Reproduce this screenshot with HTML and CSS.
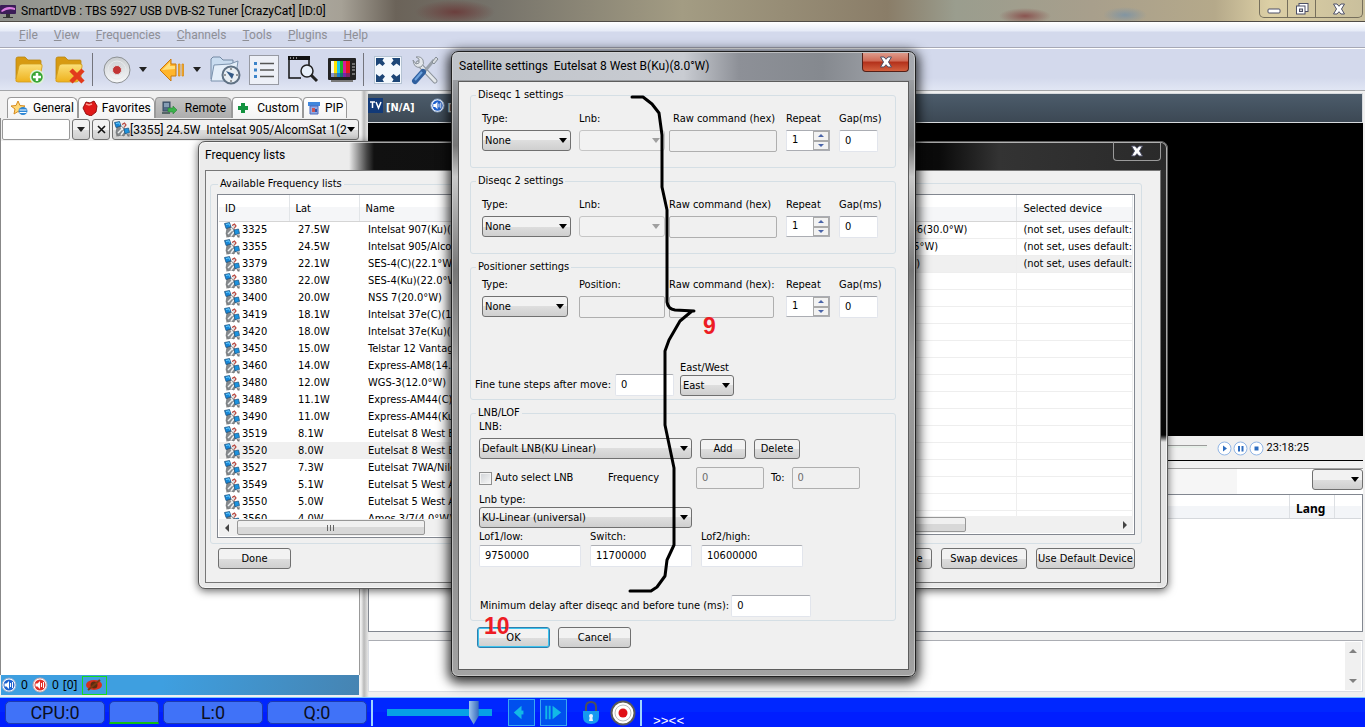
FILE: index.html
```html
<!DOCTYPE html>
<html lang="en">
<head>
<meta charset="utf-8">
<title>SmartDVB</title>
<link rel="stylesheet" href="styles.css">
</head>
<body>
<svg class="defs" aria-hidden="true">
  <defs>
    <linearGradient id="gold" x1="0" y1="0" x2="0" y2="1"><stop offset="0" stop-color="#fbe07a"/><stop offset="1" stop-color="#eeb11c"/></linearGradient>
    <linearGradient id="silver" x1="0" y1="0" x2="0" y2="1"><stop offset="0" stop-color="#c9cdd0"/><stop offset="1" stop-color="#f8f9fa"/></linearGradient>
  </defs>
  <symbol id="sat" viewBox="0 0 16 16">
    <path d="M3 6l4-1 4 3 1 3-2 4-3-1-3 1-2-3z" fill="#85898d" stroke="#5b5f63" stroke-width=".6"/>
    <path d="M4 12l4-4M7 14l3-4M7 6l2 3" stroke="#eceeef" stroke-width="1.500"/>
    <path d="M.5 1.500l5-1 1.500 4.500-5 1.500z" fill="#1787d8" stroke="#1a4d78" stroke-width=".7"/>
    <path d="M2 2.500l3-.7 .6 1.800" stroke="#6fd0ff" fill="none"/>
    <path d="M10 8l4.500-1 1 4.500-4.500 1.300z" fill="#1d94e0" stroke="#1a4d78" stroke-width=".7"/>
    <path d="M8 3.500l2.500-1.500 1.500 2-2 2.500" fill="#ddd" stroke="#b8433b" stroke-width="1.200"/>
    <path d="M13 13l1.500 2.500M15 12.500v3M3 13v2.500" stroke="#777" stroke-width="1.200"/>
  </symbol>
  <symbol id="folder" viewBox="0 0 32 30">
    <path d="M2 4q0-2 2-2h7l3 3h12q1 0 1 1v18H2z" fill="#d79a12" stroke="#b98712" stroke-width=".8"/>
    <path d="M4 27q-3 0-2-3l3-13q.5-2 3-2h18q3 0 2 3l-3 13q-.500 2-3 2z" fill="url(#gold)" stroke="#d09c1c" stroke-width=".8"/>
  </symbol>
  <symbol id="speaker-blue" viewBox="0 0 16 16">
    <circle cx="8" cy="8" r="7" fill="#fff" stroke="#8aa6cc"/><circle cx="8" cy="8" r="5.500" fill="#1f62cf"/>
    <path d="M3.500 6.500h2L8 4v8L5.500 9.500h-2z" fill="#fff"/><path d="M9.500 6v4M11.500 5v6" stroke="#fff"/>
  </symbol>
  <symbol id="speaker-red" viewBox="0 0 16 16">
    <circle cx="8" cy="8" r="7" fill="#fff" stroke="#cfa6a6"/><circle cx="8" cy="8" r="5.500" fill="#e02f28"/>
    <path d="M3.500 6.500h2L8 4v8L5.500 9.500h-2z" fill="#fff"/><path d="M9.500 6v4M11.500 5v6" stroke="#fff"/>
  </symbol>
  <symbol id="close" viewBox="0 0 14 12">
    <path d="M1.500 1h3.500L7 3.300 9 1h3.500L9.500 6l3 5H9L7 8.700 5 11H1.500l3-5z" fill="#fff" stroke="#4c4f66"/>
  </symbol>
</svg>

<div class="app">
  <header class="titlebar">
    <svg class="app-icon" viewBox="0 0 16 16"><rect x="0" y="2" width="16" height="9" rx="1" fill="#3b1d57"/><path d="M1 8q5-6 14-3v2Q8 5 2 9z" fill="#db7ee0"/><path d="M6 11h4v3H6zM3 14h10v1H3z" fill="#333"/></svg>
    <h1 class="app-title">SmartDVB : TBS 5927 USB DVB-S2 Tuner [CrazyCat] [ID:0]</h1>
    <div class="window-buttons">
      <button class="win-btn" aria-label="Minimize"><svg width="14" height="12" viewBox="0 0 14 12"><rect x="1" y="6" width="12" height="4" rx="1" fill="#fff" stroke="#4c4f66"/></svg></button>
      <button class="win-btn" aria-label="Restore"><svg width="14" height="12" viewBox="0 0 14 12"><rect x="4" y=".5" width="9" height="8" fill="#fff" stroke="#4c4f66"/><rect x="1.500" y="3" width="8.500" height="8" fill="#fff" stroke="#4c4f66"/><rect x="4.500" y="6" width="3" height="2.500" fill="#ccc" stroke="#4c4f66"/></svg></button>
      <button class="win-btn win-close" aria-label="Close"><svg width="14" height="12"><use href="#close"/></svg></button>
    </div>
  </header>

  <nav class="menubar">
    <a href="#"><u>F</u>ile</a><a href="#"><u>V</u>iew</a><a href="#"><u>F</u>requencies</a><a href="#"><u>C</u>hannels</a><a href="#"><u>T</u>ools</a><a href="#"><u>P</u>lugins</a><a href="#"><u>H</u>elp</a>
  </nav>

  <div class="toolbar">
    <button aria-label="Add folder"><svg width="32" height="30" viewBox="0 0 32 30"><use href="#folder" width="32" height="30"/><circle cx="23" cy="22" r="6.500" fill="#39a536" stroke="#dff3d8" stroke-width="1.500"/><path d="M23 18v8M19 22h8" stroke="#fff" stroke-width="2.500"/></svg></button>
    <button class="gap-m" aria-label="Delete folder"><svg width="32" height="30" viewBox="0 0 32 30"><use href="#folder" width="32" height="30"/><path d="M17 15l12 12M29 15L17 27" stroke="#e23a1d" stroke-width="4.500"/></svg></button>
    <span class="sep"></span>
    <button class="gap-m" aria-label="Record"><svg width="28" height="30" viewBox="0 0 28 30"><circle cx="14" cy="15" r="13" fill="url(#silver)" stroke="#8d9194"/><circle cx="14" cy="15" r="9" fill="none" stroke="#e8eaec"/><circle cx="14" cy="15" r="4.500" fill="#c23434" stroke="#ddd"/></svg></button>
    <span class="caret gap-m"></span>
    <button class="gap-l" aria-label="Back"><svg width="26" height="30" viewBox="0 0 26 30"><path d="M1 15L12 4v5h5v12h-5v5z" fill="#ffb52b" stroke="#c9780f"/><path d="M3 15l8-8v4h5v3z" fill="#ffe07b"/><path d="M19.500 9v12h1.500V9zM23 9v12h1.500V9z" fill="#ffb52b" stroke="#d58a1a" stroke-width=".8"/></svg></button>
    <span class="caret gap-m"></span>
    <button class="gap-m" aria-label="History"><svg width="32" height="32" viewBox="0 0 32 32"><path d="M2 25V5l2-2h7l3 3h10v5" fill="#c9dcf0" stroke="#7388a3"/><path d="M2 27l3-16 16-1 8-3-3 20z" fill="#e4eef9" stroke="#7b92ad"/><circle cx="22" cy="21" r="8.500" fill="#e8eef3" stroke="#5f7184" stroke-width="2"/><path d="M17 17l8 3-2 5z" fill="#345a86"/><path d="M22 14v2M22 26v2M15 21h2M27 21h2" stroke="#444"/></svg></button>
    <button class="list-btn gap-m" aria-label="List"><svg width="24" height="26" viewBox="0 0 24 26"><path d="M2 5h3v3H2zM2 11.500h3v3H2zM2 18h3v3H2z" fill="#3b83c9"/><path d="M8 6.500h14M8 13h14M8 19.500h14" stroke="#555" stroke-width="1.300"/></svg></button>
    <button class="gap-m" aria-label="Search window"><svg width="32" height="30" viewBox="0 0 32 30"><path d="M14 23H2V3h20v8" fill="none" stroke="#111" stroke-width="1.500"/><path d="M1 1h22v4H1z" fill="#111"/><path d="M3 3h1M6 3h1M9 3h1" stroke="#fff"/><circle cx="20" cy="16" r="6" fill="#e8f0fa" stroke="#222" stroke-width="1.500"/><path d="M24 20l6 6" stroke="#222" stroke-width="3"/></svg></button>
    <button class="gap-m" aria-label="Television"><svg width="30" height="28" viewBox="0 0 30 28"><rect x="1" y="2" width="28" height="22" rx="1" fill="#222"/><path d="M4 24h22v2H4z" fill="#777"/><rect x="4" y="5" width="19" height="16" fill="#eee"/><path d="M5.500 5v16" stroke="#f4f4f4" stroke-width="3"/><path d="M8.500 5v16" stroke="#ffe400" stroke-width="3"/><path d="M11.500 5v16" stroke="#1fc8e8" stroke-width="3"/><path d="M14.500 5v16" stroke="#19b42b" stroke-width="3"/><path d="M17.500 5v16" stroke="#d81a9a" stroke-width="3"/><path d="M21 5v16" stroke="#e21c1c" stroke-width="4"/><path d="M4 17h19v4H4z" fill="#1632b4" opacity=".5"/><path d="M25 8h3M25 11h3M25 14h3M25 18h3" stroke="#bbb"/></svg></button>
    <span class="sep"></span>
    <button class="gap-m" aria-label="Full screen"><svg width="28" height="30" viewBox="0 0 28 30"><rect x=".5" y="1.500" width="27" height="27" fill="#f3f8fd" stroke="#b5c3d3"/><path d="M2 3h8L8.500 5.500l2.500 3-2.500 2.500-3-2.500L2 11zM26 3h-8l1.500 2.500-2.500 3 2.500 2.500 3-2.500L26 11zM2 27h8l-1.500-2.500 2.500-3L8.500 19l-3 2.500L2 19zM26 27h-8l1.500-2.500-2.500-3 2.500-2.500 3 2.500L26 19z" fill="#1d4677"/></svg></button>
    <button class="gap-m" aria-label="Settings"><svg width="30" height="30" viewBox="0 0 30 30"><path d="M8 8l17 18" stroke="#8d949c" stroke-width="5" stroke-linecap="round"/><path d="M8 8l17 18" stroke="#e3e7ea" stroke-width="3" stroke-linecap="round"/><path d="M3 5l3 4 3-1 0-4-3-2q5-1 7 3t-2 7q-7 2-8-7z" fill="#e3e7ea" stroke="#8d949c"/><path d="M24 5L14 17" stroke="#99a1aa" stroke-width="3"/><path d="M26 2l2 2-4 5-2-2z" fill="#d9dde1" stroke="#858d95"/><path d="M13 17L5 26" stroke="#2f5f9e" stroke-width="6" stroke-linecap="round"/><path d="M12 17l-7 8" stroke="#6ea3dd" stroke-width="2"/></svg></button>
  </div>

  <main class="workspace">
    <section class="channels">
      <div class="tabs" role="tablist">
        <button class="tab" role="tab"><svg width="18" height="16" viewBox="0 0 18 16"><path d="M7 1l2 4.500 5 .5-4 3 1 5-4-2.500L3 14l1-5L0 6l5-.5z" fill="#ffd877" stroke="#d68b1f"/><ellipse cx="12" cy="11" rx="4.500" ry="4" fill="#2d86d4"/><path d="M8.500 10h7M8.500 12.500h7" stroke="#fff"/></svg>General</button>
        <button class="tab" role="tab"><svg width="16" height="16" viewBox="0 0 16 16"><path d="M4 2l4 1 4-2 3 5-1 6-5 4-5-2-3-6z" fill="#e01a1a" stroke="#971010"/><path d="M4 4l3 1 3-1" stroke="#ff9a8e" stroke-width="1.500" fill="none"/></svg>Favorites</button>
        <button class="tab tab-active" role="tab" aria-selected="true"><svg width="16" height="16" viewBox="0 0 16 16"><rect x="2" y="2" width="7" height="9" fill="#506a86" stroke="#36495e"/><path d="M3 4h5M3 6h5" stroke="#bcd0e2"/><path d="M7 8h5V6l4 4-4 4v-2H7z" fill="#3bb24a" stroke="#2a7f35" stroke-width=".6"/><path d="M1 12h8v2H1z" fill="#566"/></svg>Remote</button>
        <button class="tab tab-wide" role="tab"><svg width="14" height="16" viewBox="0 0 14 16"><path d="M5 3h4v3h3v4H9v3H5v-3H2V6h3z" fill="#12923f"/></svg>Custom</button>
        <button class="tab" role="tab"><svg width="14" height="14" viewBox="0 0 14 14"><path d="M1 1h12v4H1z" fill="#3f86dd"/><path d="M3 5h8v8H3z" fill="#8ea9e8" stroke="#4d68b9"/><path d="M5 7h3v4H5z" fill="#c55"/><path d="M8 8h2v3H8z" fill="#35a"/></svg>PIP</button>
      </div>
      <div class="finder">
        <input class="find-input" type="text" aria-label="Search channel">
        <button class="btn find-btn" aria-label="Search options"><span class="caret"></span></button>
        <button class="btn find-btn" aria-label="Clear search"><svg width="9" height="9" viewBox="0 0 9 9"><path d="M1 1l7 7M8 1L1 8" stroke="#111" stroke-width="1.600"/></svg></button>
        <div class="combo sat-combo"><select aria-label="Satellite"><option>[3355] 24.5W&nbsp; Intelsat 905/AlcomSat 1(2</option></select><svg width="16" height="16"><use href="#sat"/></svg></div>
      </div>
      <div class="channel-list"></div>
      <div class="audio-status">
        <svg width="16" height="16"><use href="#speaker-blue"/></svg><span>0</span>
        <svg width="16" height="16"><use href="#speaker-red"/></svg><span>0</span><span>[0]</span>
        <span class="eye"><svg width="18" height="14" viewBox="0 0 18 14"><ellipse cx="9" cy="7" rx="8" ry="5" fill="#d6301c"/><circle cx="9" cy="7" r="3.500" fill="#5a2c10"/><path d="M3 12L15 2" stroke="#7c3a10" stroke-width="2"/></svg></span>
      </div>
    </section>

    <section class="viewer">
      <div class="now-bar"><svg width="15" height="15" viewBox="0 0 15 15"><rect width="15" height="15" fill="#123a78"/><path d="M2 4h5M4.500 4v6M8 4l2.500 6L13 4" stroke="#fff" stroke-width="1.500" fill="none"/></svg><b>[N/A]</b><svg class="now-audio" width="15" height="15"><use href="#speaker-blue" width="15" height="15"/></svg><b>[</b></div>
      <div class="video"></div>
      <div class="player">
        <span class="seek"></span>
        <button aria-label="Play"><svg width="15" height="15" viewBox="0 0 15 15"><circle cx="7.500" cy="7.500" r="6.500" fill="#fff" stroke="#92b6e6"/><path d="M6 4.500l4 3-4 3z" fill="#2c6cc0"/></svg></button>
        <button aria-label="Pause"><svg width="15" height="15" viewBox="0 0 15 15"><circle cx="7.500" cy="7.500" r="6.500" fill="#fff" stroke="#92b6e6"/><path d="M5 5h2v5.500H5zM8.500 5h2v5.500h-2z" fill="#2c6cc0"/></svg></button>
        <button aria-label="Stop"><svg width="15" height="15" viewBox="0 0 15 15"><circle cx="7.500" cy="7.500" r="6.500" fill="#fff" stroke="#92b6e6"/><path d="M5.500 5.500h4v4h-4z" fill="#2c6cc0"/></svg></button>
        <time>23:18:25</time>
      </div>
      <div class="lang-filter"><div class="combo lang-combo"><select aria-label="Language"><option></option></select></div></div>
      <div class="epg">
        <div class="epg-head"><span class="epg-main"></span><b class="epg-lang">Lang</b><span class="epg-end"></span></div>
      </div>
      <div class="details"><div class="vscroll"><i class="up"></i><i class="down"></i></div></div>
    </section>
  </main>

  <footer class="statusbar">
    <span class="meter">CPU:0</span><span class="meter meter-small"></span><span class="meter">L:0</span><span class="meter">Q:0</span>
    <span class="sep-light"></span>
    <input class="volume" type="range" min="0" max="100" value="86" aria-label="Volume">
    <button class="step" aria-label="Previous"><svg width="25" height="25" viewBox="0 0 26 26"><path d="M13 6v14l-8-7z" fill="#12b9e6"/><path d="M12 11h3v4h-3z" fill="#12b9e6"/></svg></button>
    <button class="step" aria-label="Next"><svg width="25" height="25" viewBox="0 0 26 26"><path d="M5.500 6v14M9 6v14" stroke="#12b9e6" stroke-width="2"/><path d="M12 6v14l9-7z" fill="#12b9e6"/></svg></button>
    <svg class="lock" width="18" height="26" viewBox="0 0 18 26"><path d="M4 12V7q0-5 5-5t5 5v5" fill="none" stroke="#4b515b" stroke-width="2"/><path d="M1 11h16v6q0 7-8 7t-8-7z" fill="#159af0"/><circle cx="9" cy="16" r="2" fill="#e8f3ff"/><path d="M8 16h2l1 5H7z" fill="#e8f3ff"/></svg>
    <svg class="rec" width="26" height="26" viewBox="0 0 26 26"><circle cx="13" cy="13" r="11.500" fill="#fff" stroke="#5a5a5a" stroke-width="2"/><circle cx="13" cy="13" r="8" fill="#fff" stroke="#bbb"/><circle cx="13" cy="13" r="4.500" fill="#e00f17"/></svg>
    <span class="sep-light"></span>
    <span class="arrows">&gt;&gt;&lt;&lt;</span>
  </footer>
</div>

<section class="window freq-window" aria-label="Frequency lists">
  <header class="window-head"><h2>Frequency lists</h2><button class="dark-close" aria-label="Close"><svg width="14" height="12"><use href="#close"/></svg></button></header>
  <div class="window-body freq-body">
    <div class="freq-groups">
      <fieldset class="group freq-left">
        <legend>Available Frequency lists</legend>
        <div class="listbox">
          <table class="freq-table">
            <colgroup><col class="c-id"><col class="c-lat"><col></colgroup>
            <thead><tr><th>ID</th><th>Lat</th><th>Name</th></tr></thead>
            <tbody>
              <tr><td><svg><use href="#sat"/></svg>3325</td><td>27.5W</td><td>Intelsat 907(Ku)(27.5°W)</td></tr>
              <tr><td><svg><use href="#sat"/></svg>3355</td><td>24.5W</td><td>Intelsat 905/AlcomSat 1(24.5°W)</td></tr>
              <tr><td><svg><use href="#sat"/></svg>3379</td><td>22.1W</td><td>SES-4(C)(22.1°W)</td></tr>
              <tr><td><svg><use href="#sat"/></svg>3380</td><td>22.0W</td><td>SES-4(Ku)(22.0°W)</td></tr>
              <tr><td><svg><use href="#sat"/></svg>3400</td><td>20.0W</td><td>NSS 7(20.0°W)</td></tr>
              <tr><td><svg><use href="#sat"/></svg>3419</td><td>18.1W</td><td>Intelsat 37e(C)(18.1°W)</td></tr>
              <tr><td><svg><use href="#sat"/></svg>3420</td><td>18.0W</td><td>Intelsat 37e(Ku)(18.0°W)</td></tr>
              <tr><td><svg><use href="#sat"/></svg>3450</td><td>15.0W</td><td>Telstar 12 Vantage(15.0°W)</td></tr>
              <tr><td><svg><use href="#sat"/></svg>3460</td><td>14.0W</td><td>Express-AM8(14.0°W)</td></tr>
              <tr><td><svg><use href="#sat"/></svg>3480</td><td>12.0W</td><td>WGS-3(12.0°W)</td></tr>
              <tr><td><svg><use href="#sat"/></svg>3489</td><td>11.1W</td><td>Express-AM44(C)(11.1°W)</td></tr>
              <tr><td><svg><use href="#sat"/></svg>3490</td><td>11.0W</td><td>Express-AM44(Ku)(11.0°W)</td></tr>
              <tr><td><svg><use href="#sat"/></svg>3519</td><td>8.1W</td><td>Eutelsat 8 West B(C)(8.1°W)</td></tr>
              <tr class="picked"><td><svg><use href="#sat"/></svg>3520</td><td>8.0W</td><td>Eutelsat 8 West B(Ku)(8.0°W)</td></tr>
              <tr><td><svg><use href="#sat"/></svg>3527</td><td>7.3W</td><td>Eutelsat 7WA/Nilesat(7.3°W)</td></tr>
              <tr><td><svg><use href="#sat"/></svg>3549</td><td>5.1W</td><td>Eutelsat 5 West A(C)(5.1°W)</td></tr>
              <tr><td><svg><use href="#sat"/></svg>3550</td><td>5.0W</td><td>Eutelsat 5 West A(Ku)(5.0°W)</td></tr>
              <tr><td><svg><use href="#sat"/></svg>3560</td><td>4.0W</td><td>Amos 3/7(4.0°W)</td></tr>
            </tbody>
          </table>
          <div class="hscroll"><i class="left"></i><span class="thumb"></span><i class="right"></i></div>
        </div>
      </fieldset>
      <fieldset class="group freq-right">
        <div class="listbox">
          <table class="freq-table lined">
            <colgroup><col class="c-id"><col class="c-lat"><col class="c-name"><col></colgroup>
            <thead><tr><th></th><th></th><th></th><th>Selected device</th></tr></thead>
            <tbody>
              <tr><td></td><td></td><td>Hispasat 30W-4/30W-5/30W-6(30.0°W)</td><td>(not set, uses default:</td></tr>
              <tr><td></td><td></td><td>Intelsat 905/AlcomSat 1(24.5°W)</td><td>(not set, uses default:</td></tr>
              <tr class="picked"><td></td><td></td><td>Eutelsat 8 West B(Ku)(8.0°W)</td><td>(not set, uses default:</td></tr>
              <tr><td></td><td></td><td></td><td></td></tr><tr><td></td><td></td><td></td><td></td></tr>
              <tr><td></td><td></td><td></td><td></td></tr><tr><td></td><td></td><td></td><td></td></tr>
              <tr><td></td><td></td><td></td><td></td></tr><tr><td></td><td></td><td></td><td></td></tr>
              <tr><td></td><td></td><td></td><td></td></tr><tr><td></td><td></td><td></td><td></td></tr>
              <tr><td></td><td></td><td></td><td></td></tr><tr><td></td><td></td><td></td><td></td></tr>
              <tr><td></td><td></td><td></td><td></td></tr><tr><td></td><td></td><td></td><td></td></tr>
              <tr><td></td><td></td><td></td><td></td></tr><tr><td></td><td></td><td></td><td></td></tr>
              <tr><td></td><td></td><td></td><td></td></tr>
            </tbody>
          </table>
          <div class="hscroll"><i class="left"></i><span class="thumb thumb-long"></span><i class="right"></i></div>
        </div>
      </fieldset>
    </div>
    <div class="freq-actions">
      <button class="btn w73">Done</button>
      <span class="spring"></span>
      <button class="btn w59">Remove</button>
      <button class="btn w86">Swap devices</button>
      <button class="btn w99">Use Default Device</button>
    </div>
  </div>
</section>

<section class="window sat-window" aria-label="Satellite settings">
  <header class="window-head"><h2>Satellite settings&nbsp; Eutelsat 8 West B(Ku)(8.0°W)</h2><button class="red-close" aria-label="Close"><svg width="14" height="12"><use href="#close"/></svg></button></header>
  <form class="window-body sat-body">
    <fieldset class="group">
      <legend>Diseqc 1 settings</legend>
      <div class="diseqc">
        <label for="t1">Type:</label><label for="l1">Lnb:</label><label for="r1" class="indent">Raw command (hex)</label><label for="n1">Repeat</label><label for="g1">Gap(ms)</label>
        <div class="combo w89"><select id="t1"><option>None</option></select></div>
        <div class="combo w86 off"><select id="l1" disabled><option></option></select></div>
        <input class="w108" id="r1" type="text" disabled>
        <div class="spin"><input id="n1" type="text" value="1"><div class="spin-btns"><button type="button" aria-label="Increase"><i class="up"></i></button><button type="button" aria-label="Decrease"><i class="down"></i></button></div></div>
        <input class="w39" id="g1" type="text" value="0">
      </div>
    </fieldset>
    <fieldset class="group">
      <legend>Diseqc 2 settings</legend>
      <div class="diseqc">
        <label for="t2">Type:</label><label for="l2">Lnb:</label><label for="r2">Raw command (hex)</label><label for="n2">Repeat</label><label for="g2">Gap(ms)</label>
        <div class="combo w89"><select id="t2"><option>None</option></select></div>
        <div class="combo w86 off"><select id="l2" disabled><option></option></select></div>
        <input class="w108" id="r2" type="text" disabled>
        <div class="spin"><input id="n2" type="text" value="1"><div class="spin-btns"><button type="button" aria-label="Increase"><i class="up"></i></button><button type="button" aria-label="Decrease"><i class="down"></i></button></div></div>
        <input class="w39" id="g2" type="text" value="0">
      </div>
    </fieldset>
    <fieldset class="group positioner">
      <legend>Positioner settings</legend>
      <div class="diseqc">
        <label for="t3">Type:</label><label for="l3">Position:</label><label for="r3">Raw command (hex):</label><label for="n3">Repeat</label><label for="g3">Gap(ms)</label>
        <div class="combo w86"><select id="t3"><option>None</option></select></div>
        <input class="w86" id="l3" type="text" disabled>
        <input class="w105" id="r3" type="text" disabled>
        <div class="spin"><input id="n3" type="text" value="1"><div class="spin-btns"><button type="button" aria-label="Increase"><i class="up"></i></button><button type="button" aria-label="Decrease"><i class="down"></i></button></div></div>
        <input class="w39" id="g3" type="text" value="0">
      </div>
      <div class="fine">
        <label for="fine" class="fine-label">Fine tune steps after move:</label>
        <input class="w59" id="fine" type="text" value="0">
        <div class="stack"><label for="ew">East/West</label><div class="combo w54"><select id="ew"><option>East</option></select></div></div>
      </div>
    </fieldset>
    <fieldset class="group lnb">
      <legend>LNB/LOF</legend>
      <label class="line" for="lnb">LNB:</label>
      <div class="row lnb-row"><div class="combo w213"><select id="lnb"><option>Default LNB(KU Linear)</option></select></div><button type="button" class="btn w46">Add</button><button type="button" class="btn w46">Delete</button></div>
      <div class="row auto-row">
        <label class="auto"><input type="checkbox">Auto select LNB</label>
        <label for="ff" class="freq-label">Frequency</label><input id="ff" class="w68" type="text" value="0" disabled>
        <label for="ft">To:</label><input id="ft" class="w68" type="text" value="0" disabled>
      </div>
      <label class="line" for="lt">Lnb type:</label>
      <div class="combo w213"><select id="lt"><option>KU-Linear (universal)</option></select></div>
      <div class="lofs">
        <label for="lo1">Lof1/low:</label><label for="sw">Switch:</label><label for="lo2">Lof2/high:</label>
        <input id="lo1" type="text" value="9750000"><input id="sw" type="text" value="11700000"><input id="lo2" type="text" value="10600000">
      </div>
      <div class="row delay-row"><label for="dl">Minimum delay after diseqc and before tune (ms):</label><input id="dl" class="w80" type="text" value="0"></div>
    </fieldset>
    <div class="row actions"><button type="button" class="btn w73 default">OK</button><button type="button" class="btn w73">Cancel</button></div>
  </form>
  <svg class="brace" viewBox="452 52 463 624" aria-hidden="true"><path d="M632 97h11l9 7 7 9 3 22v52l5 23v92q1 7 8 8l19 1M692 311l-12 10-11 19-4 11v74l9 43v77l-7 15-2 16-8 11-6 4h-21" fill="none" stroke="#000" stroke-width="3" stroke-linejoin="round" stroke-linecap="round"/></svg>
  <span class="mark mark-nine">9</span>
  <span class="mark mark-ten">10</span>
</section>
</body>
</html>
```
FILE: styles.css
```css
* { box-sizing: border-box; }
body {
  margin: 0;
  font: 11px/14px "DejaVu Sans Condensed", "Noto Sans", sans-serif;
  color: #000;
  overflow: hidden;
}
button, input, select { font: inherit; color: inherit; margin: 0; padding: 0; }
button { border: 0; background: none; }
svg { display: block; flex: none; }
.defs { position: absolute; width: 0; height: 0; }

.app { display: flex; flex-direction: column; height: 100vh; background: #f0f0f0; }

/* title bar */
.titlebar {
  display: flex; align-items: center; height: 22px; flex: none;
  border-bottom: 1px solid #504c46;
  background:
    radial-gradient(ellipse 40px 12px at 455px 12px, #6b3f3d, transparent),
    radial-gradient(ellipse 26px 8px at 1025px 16px, #8a5450, transparent),
    radial-gradient(ellipse 22px 8px at 1125px 15px, #8295a2, transparent),
    linear-gradient(90deg, #8f918c 0, #b5b3ab 18%, #a6a196 25%, #6b6359 29%, #75726a 36%, #a39c83 50%, #8a7d68 65%, #9a9d8e 70%, #a89f8c 80%, #b5a98a 89%, #dccfa5 93%, #c9bf9c 100%);
}
.app-icon { width: 16px; height: 16px; }
.app-title { margin: 0 0 0 5px; font: 12px/20px Roboto, sans-serif; flex: 1; }
.window-buttons { display: flex; align-self: flex-start; height: 18px; margin-right: 2px; border: 1px solid #766f5c; border-top: 0; border-radius: 0 0 5px 5px; }
.win-btn { display: grid; place-items: center; width: 28px; border-right: 1px solid #766f5c; }
.win-close { width: 46px; border: 0; }

/* menu and toolbar */
.menubar { display: flex; align-items: center; gap: 16px; height: 26px; flex: none; padding-left: 19px; background: linear-gradient(#fff 0, #e6ebf7 9px, #d3d9ec 10px); border-bottom: 1px solid #a6a8b5; font: 12px/16px Roboto, sans-serif; }
.menubar a { color: #8e8f96; text-decoration: none; }
.toolbar { display: flex; align-items: center; height: 43px; flex: none; padding-left: 14px; border-top: 1px solid #fff; border-bottom: 1px solid #a3a5a8; background: linear-gradient(#d3d9ec 70%, #e1e6f4); }
.gap-m { margin-left: 8px; }
.gap-l { margin-left: 12px; }
.sep { width: 1px; height: 33px; margin: 0 2px 0 6px; background: #73747c; }
.caret { border: 4px solid transparent; border-top: 5px solid #222; border-bottom: 0; }
.list-btn { padding: 1px 2px; border: 1px solid #979aa3; background: #edf0f7; }

/* workspace */
.workspace { display: flex; flex: 1; min-height: 0; gap: 8px; padding-top: 2px; background: linear-gradient(90deg, #f0f0f0 0 361px, #b9b9b9 364px, #f0f0f0 369px); }
.channels { display: flex; flex-direction: column; width: 360px; flex: none; }
.tabs { display: flex; height: 25px; align-items: flex-end; padding-left: 7px; }
.tab { display: flex; align-items: center; gap: 4px; height: 21px; padding: 0 3px; border: 1px solid #999; border-bottom: 0; border-radius: 4px 6px 0 0; background: linear-gradient(#fff, #f4f4f4); font: 12px/16px Roboto, sans-serif; }
.tab-active { background: linear-gradient(#c4c4c4, #adadad); gap: 8px; padding: 0 5px; }
.tab-wide { gap: 7px; }
.finder { display: flex; align-items: center; height: 23px; gap: 2px; padding: 0 1px; border-left: 1px solid #888; }
.finder .find-input { width: 68px; height: 21px; border-color: #999; }
.find-btn { width: 18px; display: grid; place-items: center; padding: 0; }
.sat-combo { flex: 1; height: 21px; }
.sat-combo svg { position: absolute; left: 2px; top: 2px; pointer-events: none; }
.channel-list { flex: 1; background: #fff; border-left: 1px solid #888; border-right: 1px solid #999; }
.audio-status { display: flex; align-items: center; gap: 4px; height: 20px; margin: 0 1px 2px 1px; background: linear-gradient(100deg, #3e9fe0 45%, #4684b2); font: 12px/18px "Noto Sans", sans-serif; }
.eye { display: grid; place-items: center; width: 25px; height: 19px; border: 1px solid #17d821; }

.viewer { display: flex; flex-direction: column; flex: 1; min-width: 0; padding-right: 2px; }
.now-bar { display: flex; align-items: flex-start; gap: 3px; height: 30px; flex: none; padding: 4px 0 0; border: 1px solid #d7dade; border-left: 0; background: linear-gradient(#4c5c6b, #3c4854); color: #fff; }
.now-bar b { line-height: 20px; }
.now-audio { margin-left: 12px; }
.video { flex: 1; background: #000; }
.player { display: flex; align-items: center; height: 25px; flex: none; gap: 1px; padding-right: 54px; border-bottom: 1px solid #000; background: #f0f0f0; }
.player time { margin-left: 2px; font: 11px/16px Roboto, sans-serif; }
.seek { flex: 1; height: 3px; margin: 0 9px 3px 0; border-top: 1px solid #9b9b9b; background: #e7efe9; }
.lang-filter { display: flex; justify-content: flex-end; height: 26px; margin-top: 7px; flex: none; border-top: 1px solid #a2a2a2; background: linear-gradient(90deg, #f6f6f6 calc(100% - 126px), #fff 0); }
.lang-combo { width: 51px; }
.epg { height: 138px; flex: none; border: 1px solid #828790; background: #fff; }
.epg-head { display: flex; height: 24px; margin: 0 1px; background: linear-gradient(#fff 50%, #f3f5f8 50%); border-bottom: 1px solid #d5d8dc; }
.epg-main { flex: 1; }
.epg-lang { padding: 7px 0 0 6px; width: 46px; border: solid #dde0e4; border-width: 0 1px; font: bold 12px/14px "Noto Sans", sans-serif; }
.epg-end { width: 26px; }
.details { display: flex; justify-content: flex-end; height: 52px; flex: none; margin: 8px 0 5px; padding: 1px; border: 1px solid #d9dce2; border-top-color: #abadb3; background: #fff; }
.vscroll { display: flex; flex-direction: column; align-items: center; justify-content: space-between; width: 16px; padding: 7px 0; background: #f0f0f0; }
.up, .down, .left, .right { width: 0; height: 0; border: 4px solid transparent; }
.up { border-top: 0; border-bottom: 4px solid #808080; }
.down { border-bottom: 0; border-top: 4px solid #808080; }
.left { border-left: 0; border-right: 4px solid #444; }
.right { border-right: 0; border-left: 4px solid #444; }

/* bottom bar */
.statusbar { display: flex; align-items: center; height: 30px; flex: none; padding-left: 5px; gap: 4px; border-top: 1px solid #7cc4ff; background: linear-gradient(#0027ff 50%, #001eff 50%); color: #0b0f1e; }
.meter { width: 100px; height: 23px; border: 1px solid #1d3bb0; border-radius: 5px; background: #4072f8; text-align: center; font: 18px/21px Roboto, sans-serif; }
.meter-small { width: 50px; border-bottom: 2px solid #0fbd12; border-radius: 5px 5px 0 0; }
.sep-light { width: 2px; height: 26px; background: #9fd5ff; }
.volume { width: 105px; height: 26px; margin: 0 12px 0 10px; appearance: none; background: linear-gradient(#06a1e6, #06a1e6) center / 100% 7px no-repeat; }
.volume::-webkit-slider-thumb { appearance: none; width: 10px; height: 24px; background: linear-gradient(90deg, #9cc4ee, #3568bb); clip-path: polygon(0 0, 100% 0, 100% 65%, 50% 100%, 0 65%); }
.step { width: 27px; height: 27px; border: 1px solid #39a7f2; background: #0050ee; margin-right: 1px; }
.lock { margin-left: 10px; }
.rec { margin-left: 6px; }
.arrows { margin-left: 7px; align-self: flex-end; color: #fff; font: 13px/10px "Liberation Mono", monospace; }

/* buttons, combos and inputs */
.btn { height: 21px; border: 1px solid #707070; border-radius: 3px; background: linear-gradient(#f2f2f2 50%, #dedede 50%, #cfcfcf); white-space: nowrap; }
.default { border-color: #2f7fae; box-shadow: inset 0 0 0 1px #3cc3ee; }
.combo { position: relative; height: 21px; }
.combo select { width: 100%; height: 100%; padding-left: 2px; appearance: none; border: 1px solid #707070; border-radius: 3px; background: linear-gradient(#f2f2f2 50%, #dedede 50%, #cfcfcf); }
.combo.sat-combo select { padding: 0 0 0 17px; font: 12px/16px Roboto, sans-serif; }
.combo::after { content: ""; position: absolute; right: 4px; top: 8px; border: 4px solid transparent; border-top: 5px solid #000; border-bottom: 0; pointer-events: none; }
.combo.off select { border-color: #b4b4b4; background: #f4f4f4; }
.combo.off::after { border-top-color: #a0a0a0; right: 5px; }
input[type="text"] { height: 22px; padding: 0 0 2px 5px; border: 1px solid #e2e5ec; border-top-color: #abadb3; border-radius: 2px; background: #fff; }
input[type="text"]:disabled { border-color: #afafaf; background: #f0f0f0; color: #6d6d6d; }
.w39 { width: 39px; } .w46 { width: 46px; } .w54 { width: 54px; } .w59 { width: 59px; }
.w68 { width: 68px; } .w73 { width: 73px; } .w80 { width: 80px; } .w86 { width: 86px; }
.w89 { width: 89px; } .w99 { width: 99px; } .w105 { width: 105px; } .w108 { width: 108px; } .w213 { width: 213px; }

/* floating windows */
.window { position: absolute; display: flex; flex-direction: column; border-radius: 7px; }
.window-head { display: flex; height: 28px; flex: none; }
.window-head h2 { margin: 0; flex: 1; font: 12px/26px Roboto, sans-serif; white-space: pre; }
.window-body { flex: 1; background: #f0f0f0; border: 1px solid #5d5d5d; }
.group { margin: 0; padding: 0; min-width: 0; border: 1px solid #d5dfe5; border-radius: 3px; }
.group legend { margin-left: 5px; padding: 0 2px; }
.row { display: flex; align-items: center; }

.freq-window {
  left: 198px; top: 141px; width: 970px; height: 448px;
  padding: 0 6px 6px; border: 1px solid #5a5a5a; box-shadow: 0 2px 8px #0009, inset 0 0 0 1px #ffffffa0;
  background:
    linear-gradient(90deg, #ececec 0 150px, #444 168px, #111 175px, #0a0a0a 740px, #333 800px, #2a2a2a) 0 0 / 100% 28px no-repeat,
    linear-gradient(#333 0, #050505 293px, #e4e4e4 300px) 100% 0 / 10px 100% no-repeat,
    #e9e9e9;
}
.dark-close { align-self: flex-start; display: grid; place-items: center; width: 48px; height: 19px; border: 1px solid #9a9a9a; border-top: 0; border-radius: 0 0 4px 4px; }
.freq-body { display: flex; flex-direction: column; padding: 6px 18px 13px 4px; border-color: #777; }
.freq-groups { display: flex; align-items: flex-start; gap: 66px; flex: 1; min-height: 0; }
.freq-left { flex: none; width: 338px; padding: 3px 6px 5px; }
.freq-left legend { margin-left: 1px; }
.freq-right { flex: 1; margin-top: 6px; padding: 10px 6px 8px; }
.listbox { display: flex; flex-direction: column; height: 344px; overflow: hidden; border: 1px solid #828790; background: #fff; padding: 0 1px 1px; }
.freq-right .listbox { height: 341px; }
.freq-table { flex: 1; display: block; overflow: hidden; border-collapse: collapse; table-layout: fixed; width: 100%; }
.freq-table th { height: 26px; padding: 3px 6px 0; text-align: left; font-weight: normal; border-bottom: 1px solid #d5d5d5; border-right: 1px solid #e2e5e8; background: linear-gradient(#fff 45%, #f5f6f8 45%); white-space: nowrap; }
.freq-table td { height: 17px; padding: 0 0 0 9px; line-height: 16px; white-space: nowrap; }
.freq-table td:first-child { padding-left: 5px; }
.freq-table td svg { width: 16px; height: 16px; float: left; margin-right: 2px; }
.c-id, .c-lat { width: 70px; }
.c-name { width: 259px; }
.freq-table.lined td { border: solid #eee; border-width: 0 1px 1px 0; padding-left: 6px; }
.freq-table.lined td:nth-child(3) { padding-left: 15px; }
.picked td { background: #f0f0f0; }
.hscroll { display: flex; align-items: center; height: 17px; flex: none; padding: 0 6px; background: #f0f0f0; }
.thumb { width: 188px; height: 15px; margin: 0 auto 0 8px; border: 1px solid #979797; border-radius: 2px; background: repeating-linear-gradient(90deg, #666 0 1px, transparent 1px 3px) center / 8px 6px no-repeat, linear-gradient(#f0f0f0 50%, #d8d8d8 50%); }
.thumb-long { width: 325px; }
.freq-actions { display: flex; gap: 9px; padding: 4px 7px 0 8px; }
.spring { flex: 1; }

.sat-window {
  left: 451px; top: 51px; width: 465px; height: 626px;
  padding: 1px 6px 6px; border: 1px solid #202020;
  box-shadow: 0 3px 12px 3px #000c, inset 0 0 0 1px #d8d8d8a0;
  background:
    linear-gradient(90deg, #bfc3c9 0, #c9ccd2 50%, #8d9097 62%, #85898f 80%, #a8abb1 100%) 0 0 / 100% 28px no-repeat,
    linear-gradient(#aeb1b5 0, #7d7f82 12%, #777 15%, #c9c9c9 20%, #777 35%, #a0a0a0 50%, #8c8c8c 75%, #a3a3a3);
}
.sat-window h2 { padding-left: 1px; }
.red-close { align-self: flex-start; display: grid; place-items: center; width: 47px; height: 19px; border: 1px solid #542018; border-top: 0; border-radius: 0 0 4px 4px; background: linear-gradient(#dd9a8b 0, #cf6a55 45%, #b3301a 50%, #d2603f); }
.sat-body { display: flex; flex-direction: column; gap: 6px; padding: 6px 12px 0 11px; }
.diseqc { display: grid; grid-template-columns: 97px 90px 117px 53px 39px; row-gap: 4px; padding: 10px 0 15px 11px; }
.diseqc label { white-space: nowrap; }
.indent { padding-left: 4px; }
.positioner .diseqc { padding: 4px 0 0 11px; }
.spin { display: flex; width: 44px; height: 21px; border: 1px solid #abadb3; border-left-color: #e2e5ec; background: #fff; }
.spin input[type="text"] { width: 26px; height: 19px; border: 0; }
.spin-btns { display: flex; flex-direction: column; flex: 1; }
.spin-btns button { flex: 1; display: grid; place-items: center; border: 1px solid #aaa; background: #f2f2f2; }
.spin-btns .up { border-width: 3px; border-top: 0; border-bottom-color: #4a64a8; }
.spin-btns .down { border-width: 3px; border-bottom: 0; border-top-color: #4a64a8; }
.fine { display: flex; align-items: flex-end; padding: 43px 0 3px 4px; gap: 6px; }
.fine-label { width: 134px; line-height: 22px; white-space: nowrap; }
.lnb { padding: 0 8px 3px; }
.lnb legend { margin-left: -3px; }
.line { display: block; }
.lnb-row { gap: 8px; margin-top: 4px; }
.lnb-row .btn { height: 20px; }
.auto-row { gap: 7px; margin: 8px 0 4px; }
.auto { display: flex; align-items: center; gap: 3px; width: 122px; }
.auto input { width: 13px; height: 13px; appearance: none; border: 1px solid #8e8f8f; background: linear-gradient(135deg, #cfd2d6, #f8f8f8); box-shadow: inset 0 0 0 1px #f4f4f4; }
.freq-label { width: 81px; }
.lofs { display: grid; grid-template-columns: repeat(3, 102px); column-gap: 9px; row-gap: 1px; margin-top: 2px; }
.delay-row { gap: 2px; margin-top: 28px; padding-left: 1px; white-space: nowrap; }
.actions { gap: 8px; padding-left: 7px; }
.brace { position: absolute; inset: 0; width: 100%; height: 100%; pointer-events: none; }
.mark { position: absolute; color: #ed1c24; font: bold 23px/24px "Liberation Sans", sans-serif; }
.mark-nine { left: 251px; top: 262px; }
.mark-ten { left: 32px; top: 562px; }
```
